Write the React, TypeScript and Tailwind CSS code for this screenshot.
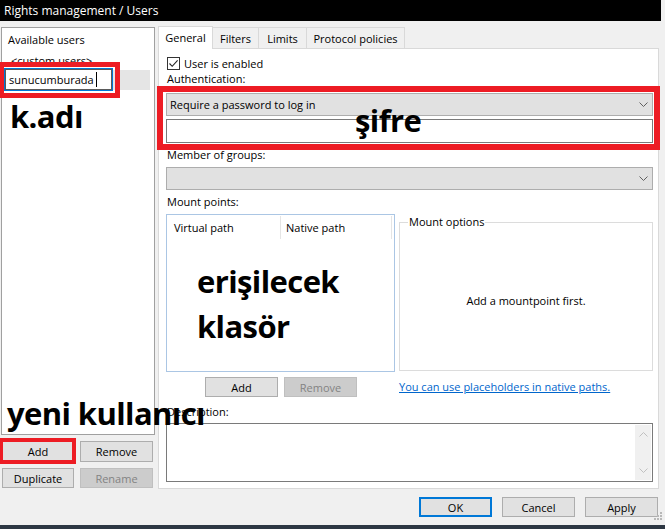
import type { ReactNode } from "react";
import clsx from "clsx";

function Btn({
  children,
  disabled,
  className,
}: {
  children: ReactNode;
  disabled?: boolean;
  className?: string;
}) {
  return (
    <button
      type="button"
      className={clsx(
        "flex items-center justify-center border leading-none",
        disabled
          ? "border-[#bfbfbf] bg-[#cccccc] text-[#838383]"
          : "border-[#adadad] bg-[#e1e1e1] text-black",
        className,
      )}
    >
      {children}
    </button>
  );
}

function Chevron({ up, className }: { up?: boolean; className?: string }) {
  return (
    <svg width="9" height="5" viewBox="0 0 9 5" className={className}>
      <path
        d={up ? "M0.5 4.5 L4.5 0.5 L8.5 4.5" : "M0.5 0.5 L4.5 4.5 L8.5 0.5"}
        fill="none"
        stroke="currentColor"
        strokeWidth="1"
      />
    </svg>
  );
}

function Select({ children }: { children?: ReactNode }) {
  return (
    <div className="flex h-[23px] w-[487px] items-center justify-between border border-[#adadad] bg-[#e1e1e1] pl-[3px] pr-[4px]">
      <span>{children}</span>
      <Chevron className="text-[#606060]" />
    </div>
  );
}

const TABS = [
  { label: "Filters", w: "w-[47px]" },
  { label: "Limits", w: "w-[49px]" },
  { label: "Protocol policies", w: "w-[99px]" },
];

export default function App() {
  return (
    <div className="relative flex h-[529px] w-[665px] flex-col overflow-hidden bg-[#f0f0f0] font-['Open_Sans',sans-serif] text-[11px] leading-[14px] text-black">
      {/* title bar */}
      <div className="flex h-[21px] shrink-0">
        <div className="flex w-[661px] items-center bg-black pl-[4px] text-[12px] text-white">
          Rights management / Users
        </div>
      </div>

      <div className="flex h-[468px] shrink-0">
        {/* users list */}
        <div className="ml-[1px] mt-[6px] flex w-[154px] flex-col">
          <div className="h-[408px] border border-[#a0a0a0] bg-white pt-[2px]">
            <div className="flex h-[20px] items-center pl-[6px]">Available users</div>
            <div className="flex h-[20px] items-center pl-[9px] pt-[2px]">&lt;custom users&gt;</div>
            <div className="relative h-[20px] w-[148px] bg-[#e5e5e5]">
              <div className="absolute left-[2px] top-[-2px] h-[23px] w-[109px] border border-[#0078d7] bg-white">
                <div className="flex h-full items-center border border-[#5a5a5a] pl-[3px]">
                  sunucumburada
                  <span className="ml-[2px] h-[15px] w-px bg-black" />
                </div>
              </div>
            </div>
          </div>
          <div className="mt-[6px] flex gap-[6px] pl-[1px]">
            <Btn className="h-[21px] w-[72px]">Add</Btn>
            <Btn className="h-[21px] w-[73px]">Remove</Btn>
          </div>
          <div className="mt-[6px] flex gap-[6px] pl-[1px]">
            <Btn className="h-[20px] w-[72px]">Duplicate</Btn>
            <Btn disabled className="h-[20px] w-[73px]">
              Rename
            </Btn>
          </div>
        </div>

        {/* tab control */}
        <div className="ml-[3px] mt-[5px] flex w-[501px] flex-col">
          <div className="relative z-10 flex h-[22px] items-end">
            <div className="-mb-px flex h-[23px] w-[55px] items-center justify-center border-x border-t border-[#d9d9d9] bg-white">
              General
            </div>
            {TABS.map((t) => (
              <div
                key={t.label}
                className={clsx(
                  "-ml-px flex h-[21px] items-center justify-center border-x border-t border-[#d9d9d9] bg-[#f0f0f0] pt-[1px]",
                  t.w,
                )}
              >
                {t.label}
              </div>
            ))}
          </div>

          <div className="flex h-[441px] flex-col border border-[#d9d9d9] bg-white pl-[7px]">
            <div className="mt-[8px] flex h-[13px] items-center gap-[4px] pl-px">
              <span className="flex h-[13px] w-[13px] items-center justify-center border border-[#333333] bg-white">
                <svg width="11" height="11" viewBox="0 0 11 11">
                  <path d="M1.5 5.5 L4.2 8.3 L9.6 2.4" fill="none" stroke="#222" strokeWidth="1.1" />
                </svg>
              </span>
              User is enabled
            </div>
            <div className="mt-[2px] pl-px">Authentication:</div>
            <div className="mt-[7px]">
              <Select>Require a password to log in</Select>
            </div>
            <div className="mt-[3px] h-[24px] w-[487px] border border-[#7a7a7a] bg-white" />
            <div className="mt-[5px] pl-px">Member of groups:</div>
            <div className="mt-[5px]">
              <Select />
            </div>
            <div className="mt-[5px] pl-px">Mount points:</div>

            <div className="mt-[5px] flex gap-[4px]">
              <div className="h-[158px] w-[229px] border border-[#abc6e4] bg-white">
                <div className="flex h-[25px]">
                  <div className="my-[1px] flex w-[114px] items-center border-r border-[#e5e5e5] pl-[7px]">
                    Virtual path
                  </div>
                  <div className="my-[1px] flex w-[111px] items-center border-r border-[#e5e5e5] pl-[5px]">
                    Native path
                  </div>
                </div>
              </div>
              <div className="relative mt-[8px] flex h-[149px] w-[254px] items-center justify-center border border-[#dcdcdc] pt-[9px]">
                <span className="absolute left-[8px] top-[-8px] bg-white px-px">Mount options</span>
                Add a mountpoint first.
              </div>
            </div>

            <div className="mt-[5px] flex items-center gap-[4px]">
              <div className="flex w-[229px] justify-center gap-[6px] pl-px">
                <Btn className="h-[20px] w-[73px]">Add</Btn>
                <Btn disabled className="h-[20px] w-[73px]">
                  Remove
                </Btn>
              </div>
              <span className="text-[#0066cc] underline underline-offset-[1px]">
                You can use placeholders in native paths.
              </span>
            </div>

            <div className="mt-[8px] pl-px">Description:</div>
            <div className="mt-[4px] flex h-[59px] w-[487px] justify-end border border-[#7a7a7a] bg-white p-px">
              <div className="flex w-[16px] flex-col items-center justify-between bg-[#f0f0f0] py-[7px] text-[#c0c0c0]">
                <Chevron up />
                <Chevron />
              </div>
            </div>
          </div>
        </div>
      </div>

      {/* dialog buttons */}
      <div className="relative flex h-[36px] shrink-0 justify-end gap-[10px] pr-[7px] pt-[8px]">
        <Btn className="h-[20px] w-[73px] border-2 !border-[#0078d7]">OK</Btn>
        <Btn className="h-[20px] w-[73px]">Cancel</Btn>
        <Btn className="h-[20px] w-[73px]">Apply</Btn>
        <svg width="9" height="9" viewBox="0 0 9 9" className="absolute bottom-[4px] right-[2px]">
          {[
            [6, 0],
            [3, 3],
            [6, 3],
            [0, 6],
            [3, 6],
            [6, 6],
          ].map(([x, y]) => (
            <rect key={`${x}-${y}`} x={x} y={y} width="2" height="2" fill="#b8b8b8" />
          ))}
        </svg>
      </div>
      <div className="h-[4px] shrink-0 bg-[#2d3743]" />

      {/* red annotation boxes */}
      <div className="pointer-events-none absolute left-[-1px] top-[62px] h-[36px] w-[121px] border-[5px] border-[#ed1c24]" />
      <div className="pointer-events-none absolute left-[157px] top-[86px] h-[64px] w-[503px] border-[6px] border-[#ed1c24]" />
      <div className="pointer-events-none absolute left-[-1px] top-[438px] h-[26px] w-[77px] border-[4px] border-[#ed1c24]" />

      {/* annotation labels */}
      <div className="pointer-events-none absolute inset-0 text-[31px] font-bold leading-none tracking-[-0.6px] text-black">
        <span className="absolute left-[10px] top-[101px]">k.adı</span>
        <span className="absolute left-[355px] top-[105px]">şifre</span>
        <span className="absolute left-[197px] top-[266px]">erişilecek</span>
        <span className="absolute left-[197px] top-[311px]">klasör</span>
        <span className="absolute left-[7px] top-[398px]">yeni kullanıcı</span>
      </div>
    </div>
  );
}
